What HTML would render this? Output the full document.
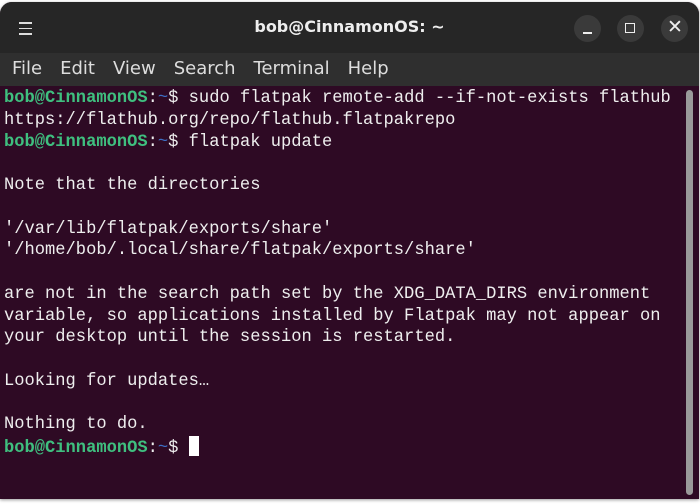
<!DOCTYPE html>
<html><head><style>
body{margin:0;width:700px;height:504px;background:#fff;overflow:hidden;font-family:"DejaVu Sans","Liberation Sans",sans-serif}
.win{position:absolute;left:0;top:2px;width:699px;height:497px;border-radius:12px 12px 0 0;overflow:hidden;background:#2e0a24;box-shadow:0 1px 3px rgba(0,0,0,.4)}
.title{height:51px;background:#262626;color:#eee;position:relative}
.title .t{position:absolute;left:0;right:0;top:15px;text-align:center;font-weight:bold;font-size:16px}
.ham{position:absolute;left:19px;top:20px;width:13px}
.ham div{height:1.5px;background:#ddd;margin-bottom:4px}
.btn{position:absolute;top:13px;width:27px;height:27px;border-radius:50%;background:#3a3a3a}
.menu{height:33px;background:#2f2f2f;color:#ddd;font-size:18px;line-height:32px;padding-left:12px}
.menu span{margin-right:18px}
.term{position:relative;padding:2px 0 0 4px;font-family:"Liberation Mono",monospace;font-size:17.1px;line-height:21.75px;color:#eee;white-space:pre}
.g{color:#3fbf7f;font-weight:bold}.b{color:#3d6fc4}
.sb{position:absolute;left:686px;top:88px;width:7px;height:405px;background:#9a9a9a;border-radius:4px}
.cur{display:inline-block;width:10px;height:20px;background:#fff;vertical-align:-4px}
</style></head><body>
<div class="win">
<div class="title"><div class="ham"><div></div><div></div><div></div></div><div class="t">bob@CinnamonOS: ~</div>
<div class="btn" style="left:574px"><div style="position:absolute;left:9px;top:17px;width:9px;height:1.5px;background:#eee"></div></div>
<div class="btn" style="left:617px"><div style="position:absolute;left:8px;top:8px;width:8px;height:8px;border:1.5px solid #eee"></div></div>
<div class="btn" style="left:661px"><div style="position:absolute;left:6px;top:1px;color:#eee;font-size:19px">✕</div></div>
</div>
<div class="menu"><span>File</span><span>Edit</span><span>View</span><span>Search</span><span>Terminal</span><span>Help</span></div>
<div class="term"><span class="g">bob@CinnamonOS</span>:<span class="b">~</span>$ sudo flatpak remote-add --if-not-exists flathub
https://flathub.org/repo/flathub.flatpakrepo
<span class="g">bob@CinnamonOS</span>:<span class="b">~</span>$ flatpak update

Note that the directories

'/var/lib/flatpak/exports/share'
'/home/bob/.local/share/flatpak/exports/share'

are not in the search path set by the XDG_DATA_DIRS environment
variable, so applications installed by Flatpak may not appear on
your desktop until the session is restarted.

Looking for updates…

Nothing to do.
<span class="g">bob@CinnamonOS</span>:<span class="b">~</span>$ <span class="cur"></span></div>
<div class="sb"></div>
</div>
</body></html>
